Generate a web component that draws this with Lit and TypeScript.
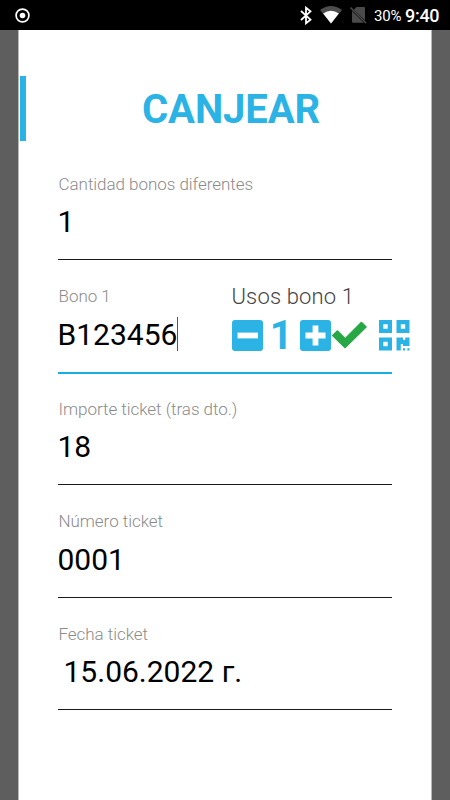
import { LitElement, html, css, svg } from "lit";
import { customElement, property } from "lit/decorators.js";

@customElement("status-bar")
class StatusBar extends LitElement {
  static styles = css`
    :host { display: flex; height: 30px; background: #000; color: #fff; align-items: center; box-sizing: border-box; padding: 0 11px 0 15px; }
    svg { display: block; flex: none; }
    .gap { flex: 1; }
    .bluetooth { margin-right: 8px; }
    .wifi { margin-right: 8px; }
    .sim { margin-right: 7px; }
    .battery { font-size: 15px; line-height: 30px; margin-top: 2px; letter-spacing: -0.2px; width: 31px; white-space: nowrap; }
    .clock { font-size: 18px; font-weight: 500; line-height: 30px; margin-top: 1px; width: 34px; white-space: nowrap; letter-spacing: -0.3px; }
  `;
  render() {
    return html`
      <svg width="15" height="15" viewBox="0 0 15 15"><circle cx="7.5" cy="7.5" r="6.4" fill="none" stroke="#fff" stroke-width="1.7"/><circle cx="7.5" cy="7.5" r="2.8" fill="#fff"/></svg>
      <span class="gap"></span>
      <svg class="bluetooth" width="12" height="19" viewBox="0 0 12 19"><path d="M1 5 L10.5 13.7 L6 17.3 V1.7 L10.5 5.3 L1 14" fill="none" stroke="#fff" stroke-width="1.8"/></svg>
      <svg class="wifi" width="22" height="18" viewBox="0 0 22 18"><path d="M0 4 Q11 -4 22 4 L11 17.5Z" fill="#4d4d4d"/><path d="M3.2 7.4 Q11 2.2 18.8 7.4 L11 17.5Z" fill="#fff"/></svg>
      <svg class="sim" width="17" height="18" viewBox="0 0 17 18"><path d="M6.5 1H14Q15 1 15 2V14.2L3.8 3.7ZM2 5L14 16.8H3Q2 16.8 2 15.8Z" fill="#4a4a4a"/><path d="M.6 1.6L16 17" stroke="#4a4a4a" stroke-width="1.5"/></svg>
      <span class="battery">30%</span><span class="clock">9:40</span>`;
  }
}

@customElement("form-field")
class FormField extends LitElement {
  @property() label = "";
  @property() value = "";
  @property({ type: Boolean, reflect: true }) active = false;
  @property({ type: Boolean, reflect: true }) date = false;
  static styles = css`
    :host { display: flex; height: 112.5px; width: 334.5px; box-sizing: border-box; flex-direction: column; }
    .row { display: flex; height: 88px; }
    .main { width: 174px; flex: none; }
    .label { height: 20px; line-height: 20px; font-size: 17px; font-weight: 300; letter-spacing: -0.04px; color: #8b8b8b; white-space: nowrap; padding-left: 1px; }
    .entry { display: flex; align-items: center; height: 36px; margin-top: 10px; font-size: 30px; white-space: pre; color: #000; }
    .caret { width: 1px; height: 34px; background: #555; }
    .line { height: 1px; background: #1a1a1a; margin-top: -2.5px; }
    :host([active]) .line { height: 2px; background: #16afe4; }
    :host([date]) .entry { padding-left: 6px; }
  `;
  render() {
    return html`
      <div class="row">
        <div class="main">
          <div class="label">${this.label}</div>
          <div class="entry"><span>${this.value}</span>${this.active ? html`<i class="caret"></i>` : ""}</div>
        </div>
        <slot></slot>
      </div>
      <div class="line"></div>`;
  }
}

const stepper = (plus: boolean) => svg`
  <rect width="31" height="31" rx="3" fill="#2bb3e5"/>
  <path d=${plus ? "M5.5 15.5H25.5M15.5 5.5V25.5" : "M5.5 15.5H26"} stroke="#fff" stroke-width="5.8"/>`;

@customElement("uses-counter")
class UsesCounter extends LitElement {
  static styles = css`
    :host { display: block; width: 180px; flex: none; }
    .title { height: 24px; line-height: 24px; font-size: 22px; font-weight: 300; letter-spacing: 0.15px; color: #444; white-space: nowrap; margin-top: -1px; }
    .controls { display: flex; height: 31px; align-items: center; margin: 10.7px 0 0 0.5px; }
    .count { width: 36.5px; text-align: center; font-size: 40px; line-height: 31px; font-weight: 700; color: #2bb3e5; }
    svg { display: block; flex: none; }
    .check { margin-left: 1px; }
    .qr { margin-left: 12.5px; }
  `;
  render() {
    return html`
      <div class="title">Usos bono 1</div>
      <div class="controls">
        <svg width="31" height="31" viewBox="0 0 31 31">${stepper(false)}</svg>
        <span class="count">1</span>
        <svg width="31" height="31" viewBox="0 0 31 31">${stepper(true)}</svg>
        <svg class="check" width="35" height="28" viewBox="0 0 35 28"><path d="M0 14.3L4.8 9.5Q5.4 9 6 9.6L13.2 16.8L28.8 1.1Q29.4 .6 30 1.1L34.6 5.5Q35 6 34.5 6.6L13.6 26.9Q13 27.4 12.4 26.9L.2 15.1Q-.1 14.7 0 14.3Z" fill="#28a745"/></svg>
        <svg class="qr" width="31" height="31" viewBox="0 0 31 31"><path fill="#2bb3e5" fill-rule="evenodd" d="M0 0H13V13H0ZM4.3 4.3V8.7H8.7V4.3ZM17.5 0H30.5V13H17.5ZM21.8 4.3V8.7H26.2V4.3ZM0 17.5H13V30.5H0ZM4.3 21.8V26.2H8.7V21.8ZM17.5 17.5H24V20H26.2V17.5H30.5V26H24V24H21.8V30.5H17.5ZM24 28.3H26.1V30.5H24ZM28.4 28.3H30.5V30.5H28.4Z"/></svg>
      </div>`;
  }
}

@customElement("app-root")
class AppRoot extends LitElement {
  static styles = css`
    :host { display: flex; flex-direction: column; width: 450px; height: 800px; overflow: hidden; background: #5e5e5e; font-family: Roboto, sans-serif; }
    .page { flex: 1; margin: 0 18px 0 18px; background: #fff; border: solid #b8b8b8; border-width: 0 1px; box-sizing: border-box; }
    .heading { display: flex; height: 65px; margin: 46.4px 0 0 1px; }
    .accent { width: 6px; background: #2bb3e5; }
    h1 { margin: 0; flex: 1; text-align: center; font-size: 40px; line-height: 67px; font-weight: 700; letter-spacing: -0.1px; color: #2bb3e5; padding-left: 5px; }
    .fields { margin: 32.3px 0 0 38.5px; }
  `;
  render() {
    return html`
      <status-bar></status-bar>
      <main class="page">
        <div class="heading"><span class="accent"></span><h1>CANJEAR</h1></div>
        <div class="fields">
          <form-field label="Cantidad bonos diferentes" value="1"></form-field>
          <form-field label="Bono 1" value="B123456" active><uses-counter></uses-counter></form-field>
          <form-field label="Importe ticket (tras dto.)" value="18"></form-field>
          <form-field label="Número ticket" value="0001"></form-field>
          <form-field label="Fecha ticket" value="15.06.2022 г." date></form-field>
        </div>
      </main>`;
  }
}
